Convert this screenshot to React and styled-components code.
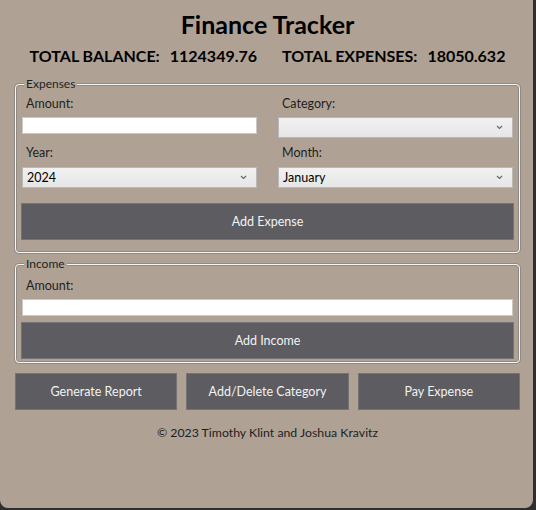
import React from 'react'
import styled, { createGlobalStyle } from 'styled-components'

const colors = {
  window: '#afa295',
  frame: '#2e2e2e',
  button: '#5d5c61',
  buttonBorder: '#747378',
  text: '#1e1e1e',
}

const GlobalStyle = createGlobalStyle`
  html, body {
    margin: 0;
    padding: 0;
    background: ${colors.frame};
  }
  body {
    font-family: Lato, 'Open Sans', sans-serif;
  }
`

const Window = styled.main`
  width: 533px;
  height: 508px;
  box-sizing: border-box;
  background: ${colors.window};
  border-radius: 0 0 8px 8px;
  padding: 9px 13px 0 15px;
  display: flex;
  flex-direction: column;
  color: ${colors.text};
`

const Title = styled.h1`
  margin: 0;
  font-size: 25px;
  line-height: 30px;
  font-weight: 700;
  text-align: center;
  color: #000;
`

const Totals = styled.div`
  margin-top: 6px;
  display: flex;
  justify-content: center;
  gap: 25px;
  font-size: 16px;
  line-height: 22px;
  font-weight: 700;
  color: #000;
`

const Total = styled.span`
  display: flex;
  gap: 10px;
`

const Group = styled.fieldset`
  margin: ${(p) => p.$top}px 0 0;
  padding: 0 5px ${(p) => p.$bottom}px;
  border: 1px solid #f6f6f6;
  border-radius: 4px;
  box-shadow: 0 0 0 1px #8f8a86, inset 0 0 0 1px #8f8a86;
  min-width: 0;
`

const Legend = styled.legend`
  margin-left: 3px;
  padding: 0 2px;
  font-size: 12px;
  line-height: 16px;
  background: ${colors.window};
  color: ${colors.text};
`

const FieldGrid = styled.div`
  display: grid;
  grid-template-columns: 1fr 1fr;
  column-gap: 21px;
  padding: 0 1px;
`

const Field = styled.div`
  display: flex;
  flex-direction: column;
  margin-top: ${(p) => p.$top || 0}px;
  padding: 0 ${(p) => p.$pad || 0}px;
`

const Label = styled.label`
  font-size: 12.5px;
  line-height: 18px;
  padding-left: 4px;
  margin-bottom: ${(p) => p.$gap || 5}px;
  color: ${colors.text};
`

const TextBox = styled.input`
  height: 17px;
  box-sizing: border-box;
  margin: 0;
  border: 1px solid #c9c9c9;
  background: #fff;
  outline: none;
  font-family: inherit;
  font-size: 12px;
`

const Combo = styled.div`
  height: 21px;
  box-sizing: border-box;
  border: 1px solid #b9b9b9;
  background: linear-gradient(#f1f1f1, #e6e6e6);
  display: flex;
  align-items: center;
  justify-content: space-between;
  padding: 0 9px 0 4px;
  font-size: 12.5px;
  color: #000;
`

const Button = styled.button`
  width: ${(p) => (p.$wide ? '100%' : 'auto')};
  height: ${(p) => p.$h || 37}px;
  margin: ${(p) => p.$top || 0}px 0 0;
  box-sizing: border-box;
  border: 1px solid ${colors.buttonBorder};
  background: ${colors.button};
  color: #f2f2f2;
  font-family: inherit;
  font-size: 12.5px;
  padding: 0;
  cursor: pointer;
`

const ButtonRow = styled.div`
  margin-top: 10px;
  display: grid;
  grid-template-columns: repeat(3, 1fr);
  column-gap: 9px;
`

const Footer = styled.p`
  margin: 14px 0 0;
  text-align: center;
  font-size: 12.3px;
  line-height: 18px;
  color: ${colors.text};
`

const Chevron = () => (
  <svg width="7" height="5" viewBox="0 0 7 5" fill="none">
    <path d="M1 1l2.5 2.5L6 1" stroke="#6a6a6a" strokeWidth="1.2" />
  </svg>
)

function Select({ value }) {
  return (
    <Combo>
      <span>{value}</span>
      <Chevron />
    </Combo>
  )
}

function App() {
  return (
    <>
      <GlobalStyle />
      <Window>
        <Title>Finance Tracker</Title>
        <Totals>
          <Total>
            <span>TOTAL BALANCE:</span>
            <span>1124349.76</span>
          </Total>
          <Total>
            <span>TOTAL EXPENSES:</span>
            <span>18050.632</span>
          </Total>
        </Totals>

        {/* Expenses */}
        <Group $top={9} $bottom={12}>
          <Legend>Expenses</Legend>
          <FieldGrid>
            <Field $top={3}>
              <Label $gap={4}>Amount:</Label>
              <TextBox />
            </Field>
            <Field $top={3}>
              <Label $gap={4}>Category:</Label>
              <Select value="" />
            </Field>
            <Field $top={6}>
              <Label>Year:</Label>
              <Select value="2024" />
            </Field>
            <Field $top={6}>
              <Label>Month:</Label>
              <Select value="January" />
            </Field>
          </FieldGrid>
          <Button $wide $top={15}>Add Expense</Button>
        </Group>

        {/* Income */}
        <Group $top={3} $bottom={3}>
          <Legend>Income</Legend>
          <Field $top={5} $pad={1}>
            <Label $gap={4}>Amount:</Label>
            <TextBox />
          </Field>
          <Button $wide $top={6}>Add Income</Button>
        </Group>

        <ButtonRow>
          <Button>Generate Report</Button>
          <Button>Add/Delete Category</Button>
          <Button>Pay Expense</Button>
        </ButtonRow>

        <Footer>© 2023 Timothy Klint and Joshua Kravitz</Footer>
      </Window>
    </>
  )
}

export default App
